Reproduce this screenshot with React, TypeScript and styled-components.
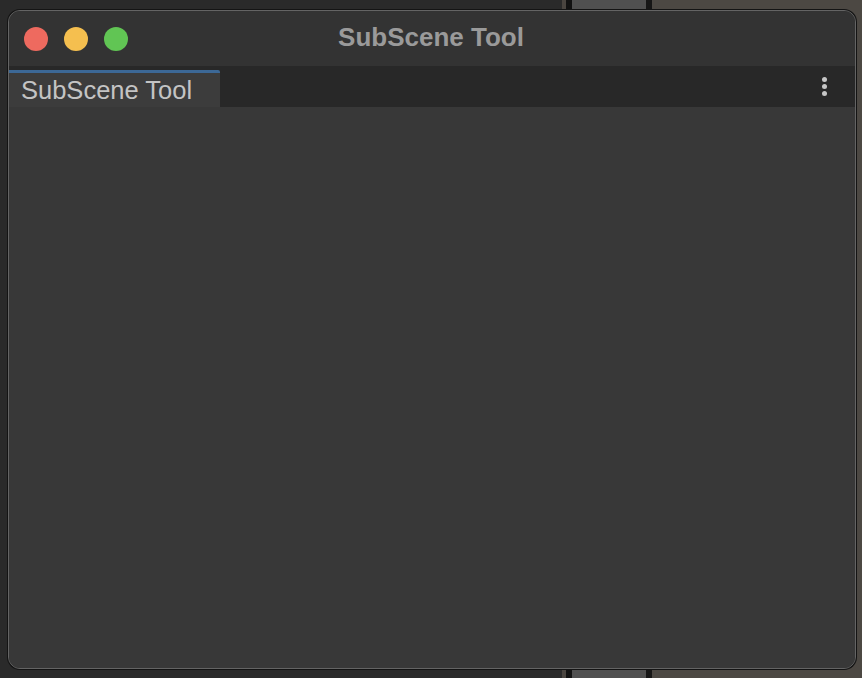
import React from 'react';
import styled, { createGlobalStyle } from 'styled-components';

const GlobalStyle = createGlobalStyle`
  html, body {
    margin: 0;
    height: 100%;
  }
  body {
    box-sizing: border-box;
    padding: 10px 6px 9px 8px;
    font-family: 'Liberation Sans', Arial, sans-serif;
    background: linear-gradient(
      to right,
      #2a2a2a 0,
      #2a2a2a 562px,
      #4a4540 562px,
      #4a4540 566px,
      #121212 566px,
      #121212 572px,
      #505050 572px,
      #505050 646px,
      #161616 646px,
      #161616 652px,
      #4c4843 652px
    );
  }
  #root {
    height: 100%;
  }
`;

const Window = styled.div`
  box-sizing: border-box;
  width: 848px;
  height: 659px;
  display: flex;
  flex-direction: column;
  border: 1px solid #646464;
  border-radius: 12px;
  box-shadow: 0 0 0 1px #141414;
  overflow: hidden;
  background: #383838;
`;

const TitleBar = styled.div`
  height: 55px;
  flex-shrink: 0;
  display: grid;
  grid-template-columns: 1fr auto 1fr;
  align-items: center;
  background: #333333;
  padding: 0 15px;
`;

const Lights = styled.div`
  display: flex;
  gap: 16px;
`;

const Light = styled.span<{ $color: string }>`
  width: 24px;
  height: 24px;
  border-radius: 50%;
  background: ${(p) => p.$color};
`;

const Title = styled.div`
  font-size: 26px;
  font-weight: bold;
  color: #9a9a9a;
  margin-top: -3px;
  margin-left: -2px;
`;

const TabBar = styled.div`
  height: 41px;
  flex-shrink: 0;
  display: flex;
  align-items: flex-end;
  background: #282828;
  padding-right: 28px;
`;

const Tab = styled.div`
  box-sizing: border-box;
  width: 211px;
  height: 37px;
  background: #3c3c3c;
  border-top: 3px solid #3c6896;
  border-top-right-radius: 2px;
  padding: 2px 0 0 12px;
  font-size: 25.5px;
  line-height: 30px;
  color: #c4c4c4;
`;

const Spacer = styled.div`
  flex: 1;
`;

const MenuButton = styled.div`
  align-self: center;
  display: flex;
  flex-direction: column;
  gap: 2px;
`;

const Dot = styled.span`
  width: 5px;
  height: 5px;
  border-radius: 50%;
  background: #c6c6c6;
`;

const Content = styled.div`
  flex: 1;
  background: #383838;
`;

export default function App() {
  return (
    <>
      <GlobalStyle />
      <Window>
        <TitleBar>
          <Lights>
            <Light $color="#ee6a5f" />
            <Light $color="#f5bf4f" />
            <Light $color="#61c554" />
          </Lights>
          <Title>SubScene Tool</Title>
          <div />
        </TitleBar>
        <TabBar>
          <Tab>SubScene Tool</Tab>
          <Spacer />
          <MenuButton>
            <Dot />
            <Dot />
            <Dot />
          </MenuButton>
        </TabBar>
        <Content />
      </Window>
    </>
  );
}
